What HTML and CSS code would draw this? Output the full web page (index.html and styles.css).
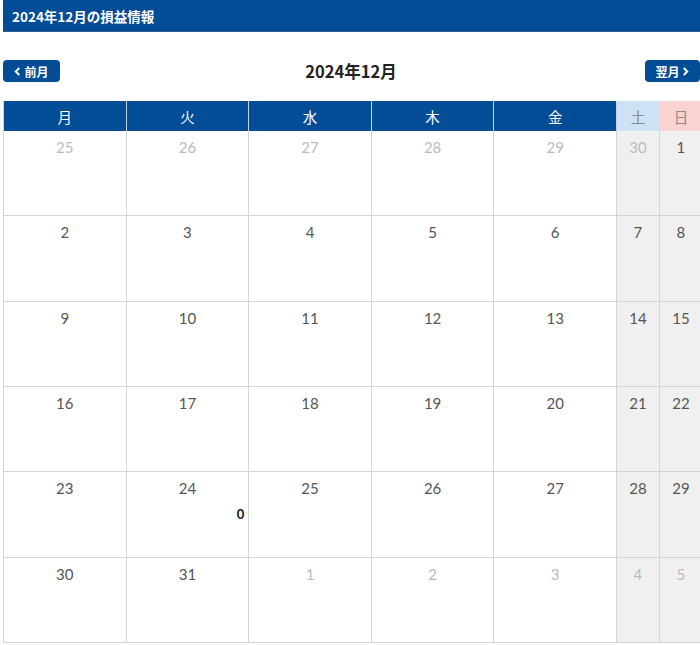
FILE: index.html
```html
<!DOCTYPE html>
<html lang="ja">
<head>
<meta charset="utf-8">
<link rel="stylesheet" href="styles.css">
</head>
<body>
<div class="page">
  <h2 class="title-bar">2024年12月の損益情報</h2>
  <div class="nav">
    <a class="btn"><svg class="chev" viewBox="0 0 8 10" width="7" height="9"><path d="M6 1 L2 5 L6 9" fill="none" stroke="#fff" stroke-width="2.2"/></svg>前月</a>
    <div class="month">2024年12月</div>
    <a class="btn btn-next">翌月<svg class="chev" viewBox="0 0 8 10" width="7" height="9"><path d="M2 1 L6 5 L2 9" fill="none" stroke="#fff" stroke-width="2.2"/></svg></a>
  </div>
  <div class="cal">
    <div class="hd">月</div><div class="hd">火</div><div class="hd">水</div><div class="hd">木</div><div class="hd">金</div><div class="hd sat">土</div><div class="hd sun">日</div>

    <div class="c o"><span>25</span></div><div class="c o"><span>26</span></div><div class="c o"><span>27</span></div><div class="c o"><span>28</span></div><div class="c o"><span>29</span></div><div class="c we o"><span>30</span></div><div class="c we"><span>1</span></div>

    <div class="c"><span>2</span></div><div class="c"><span>3</span></div><div class="c"><span>4</span></div><div class="c"><span>5</span></div><div class="c"><span>6</span></div><div class="c we"><span>7</span></div><div class="c we"><span>8</span></div>

    <div class="c"><span>9</span></div><div class="c"><span>10</span></div><div class="c"><span>11</span></div><div class="c"><span>12</span></div><div class="c"><span>13</span></div><div class="c we"><span>14</span></div><div class="c we"><span>15</span></div>

    <div class="c"><span>16</span></div><div class="c"><span>17</span></div><div class="c"><span>18</span></div><div class="c"><span>19</span></div><div class="c"><span>20</span></div><div class="c we"><span>21</span></div><div class="c we"><span>22</span></div>

    <div class="c"><span>23</span></div><div class="c"><span>24</span><b class="pl">0</b></div><div class="c"><span>25</span></div><div class="c"><span>26</span></div><div class="c"><span>27</span></div><div class="c we"><span>28</span></div><div class="c we"><span>29</span></div>

    <div class="c"><span>30</span></div><div class="c"><span>31</span></div><div class="c o"><span>1</span></div><div class="c o"><span>2</span></div><div class="c o"><span>3</span></div><div class="c we o"><span>4</span></div><div class="c we o"><span>5</span></div>
  </div>
</div>
</body>
</html>
```

FILE: styles.css
```css
html, body {
  margin: 0;
  padding: 0;
  background: #fff;
}
body {
  font-family: "Noto Sans CJK JP", "Noto Sans", sans-serif;
  overflow: hidden;
}
.page {
  margin-left: 3px;
  width: 700px;
}
.title-bar {
  margin: 0;
  height: 32px;
  background: #034c96;
  border-bottom: 1px solid #2c5f8a;
  box-sizing: border-box;
  color: #fff;
  font-size: 13.5px;
  font-weight: 700;
  line-height: 32px;
  padding-left: 9px;
}
.nav {
  display: flex;
  align-items: center;
  justify-content: space-between;
  margin-top: 28px;
  height: 22px;
  width: 697px;
}
.btn {
  display: flex;
  align-items: center;
  justify-content: center;
  gap: 3px;
  height: 22px;
  width: 57px;
  background: #034c96;
  border-radius: 4px;
  color: #fff;
  font-size: 12px;
  font-weight: 700;
  box-sizing: border-box;
}
.btn-next {
  width: 55px;
}
.month {
  font-size: 16.5px;
  font-weight: 700;
  color: #222;
  margin-right: 3px;
}
.cal {
  margin-top: 19px;
  display: grid;
  grid-template-columns: repeat(5, 122.6px) 43px 43px;
  grid-template-rows: 30px repeat(6, 85.33px);
  border-left: 1px solid #d4d4d4;
  box-sizing: border-box;
}
.hd {
  background: #034c96;
  color: #fff;
  font-size: 14.5px;
  display: flex;
  align-items: center;
  justify-content: center;
  border-right: 1px solid #c9d4e2;
  box-sizing: border-box;
}
.hd.sat {
  background: #cfe2f5;
  color: #8a8a8a;
  border-right: 1px solid #dcdcdc;
}
.hd.sun {
  background: #f9d3cf;
  color: #8a8a8a;
}
.c {
  border-right: 1px solid #d4d4d4;
  border-bottom: 1px solid #d4d4d4;
  box-sizing: border-box;
  display: flex;
  flex-direction: column;
  align-items: center;
  padding-top: 6px;
  font-family: Lato, "Noto Sans", sans-serif;
  font-size: 15px;
  color: #555;
}
.c span {
  line-height: 20px;
}
.c.we {
  background: #f0f0f0;
}
.c.o {
  color: #bbb;
}
.pl {
  align-self: flex-end;
  margin-right: 4px;
  margin-top: 8px;
  font-size: 13px;
  font-weight: 700;
  color: #111;
  line-height: 16px;
}
```
